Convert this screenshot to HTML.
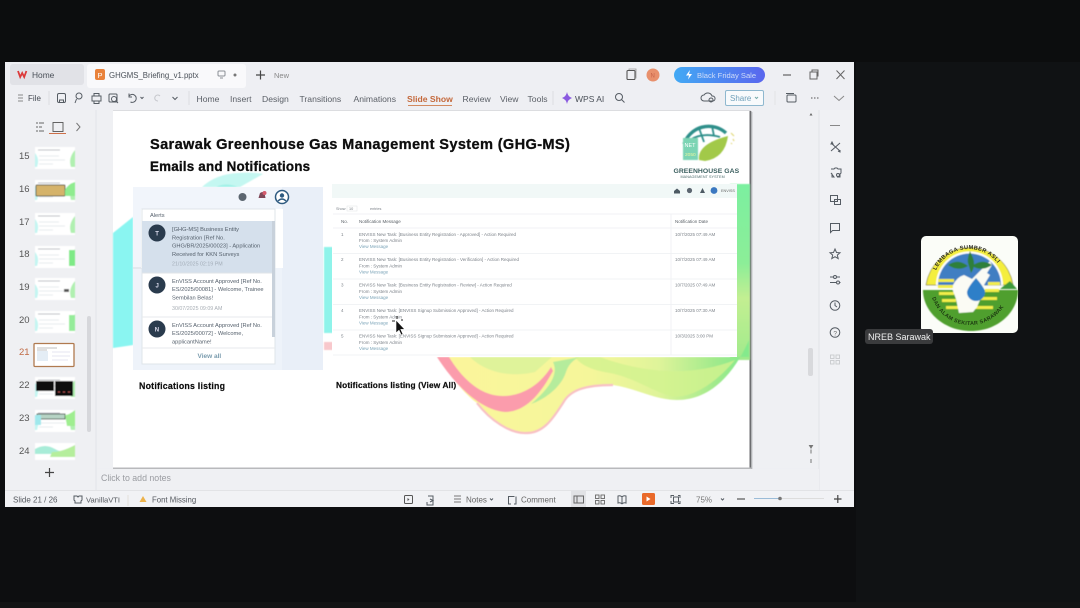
<!DOCTYPE html>
<html><head><meta charset="utf-8"><title>GHGMS Briefing</title>
<style>
html,body{margin:0;padding:0;background:#0d0e10;width:1080px;height:608px;overflow:hidden}
svg{display:block;position:absolute;left:0;top:0}
text{font-family:"Liberation Sans",sans-serif}
.ui{font-size:9px;fill:#444a52}
.tab{font-size:7.800px;fill:#4a5058}
.n{font-size:8.600px;fill:#5a5f66}
.ic{fill:none;stroke:#555b63;stroke-width:1}
.a{font-size:5.700px;fill:#56616d}
.m{font-size:4.500px;fill:#7d838a}
.l{font-size:4.500px;fill:#7ba4b8}
.h{font-weight:bold;fill:#0c0c0c;stroke:#0c0c0c}
</style></head><body>
<svg width="1080" height="608" viewBox="0 0 1080 608" xmlns="http://www.w3.org/2000/svg">
<defs>
<filter id="b" x="-5%" y="-5%" width="110%" height="110%"><feGaussianBlur stdDeviation="0.35"/></filter>
<filter id="bt" x="-5%" y="-5%" width="110%" height="110%"><feGaussianBlur stdDeviation="0.28"/></filter>
<filter id="b3" x="-20%" y="-20%" width="140%" height="140%"><feGaussianBlur stdDeviation="0.6"/></filter>
<linearGradient id="sale" x1="0" x2="1"><stop offset="0" stop-color="#42a9f4"/><stop offset="1" stop-color="#5a66ee"/></linearGradient>
<linearGradient id="wave" gradientUnits="userSpaceOnUse" x1="437" y1="0" x2="745" y2="0"><stop offset="0" stop-color="#fbf59c"/><stop offset=".5" stop-color="#f5f69a"/><stop offset=".72" stop-color="#dff49a"/><stop offset=".9" stop-color="#a2ea8c"/><stop offset="1" stop-color="#84ea8c"/></linearGradient>
<linearGradient id="rgreen" x1="0" x2="0" y1="0" y2="1"><stop offset="0" stop-color="#7cf0a0"/><stop offset=".45" stop-color="#8cee98"/><stop offset=".65" stop-color="#c3ef92"/><stop offset="1" stop-color="#a0ea8c"/></linearGradient>
<g id="th"><rect width="40" height="22" fill="#fff"/><path d="M0 6q5 6 2 14H0z" fill="#c4f6f2"/><path d="M40 3q-7 8-4 17h4z" fill="#b0f0b0"/><path d="M3 3h22" stroke="#a5aab0" stroke-width=".7"/><path d="M4 9h20M4 13h26M4 17h14" stroke="#dfe4e8" stroke-width=".8"/></g>
</defs>
<rect width="1080" height="608" fill="#0d0e10"/>
<rect x="856" y="0" width="224" height="608" fill="#101214"/>
<rect x="0" y="0" width="1080" height="62" fill="#0c0d0e"/>
<rect x="0" y="602" width="1080" height="6" fill="#131415"/>

<!-- window -->
<rect x="5" y="62" width="849" height="445" fill="#eeeff3"/>
<g filter="url(#b)">
<!-- tabs -->
<rect x="10" y="64" width="74" height="21" rx="3" fill="#e1e2e7"/>
<path d="M18 71l2.200 6 2-4 2 4 2.200-6" fill="none" stroke="#dc3b3b" stroke-width="1.800"/>
<text x="32" y="78" class="tab" style="font-size:8.400px">Home</text>
<rect x="87" y="64" width="159" height="24" rx="3" fill="#f9f9fb"/>
<rect x="95" y="69" width="10" height="11" rx="2" fill="#e9823a"/>
<text x="97.500" y="78" style="font-size:7.500px;fill:#fff">P</text>
<text x="109" y="78" class="tab">GHGMS_Briefing_v1.pptx</text>
<rect x="218" y="71" width="7" height="5" rx="1" fill="none" stroke="#8a8f96"/><path d="M220 78h3" stroke="#8a8f96"/>
<circle cx="235" cy="75" r="1.500" fill="#777"/>
<path d="M256 75h9M260.500 70.500v9" stroke="#444" stroke-width="1.200"/>
<text x="274" y="78" style="font-size:7.500px;fill:#888">New</text>
<rect x="627" y="70.500" width="8" height="9" rx="1" fill="none" stroke="#555" stroke-width="1.100"/><path d="M629 70v-1h7v9h-1" fill="none" stroke="#999" stroke-width=".8"/>
<circle cx="653" cy="75" r="6.500" fill="#e8906c"/><text x="650.500" y="77.500" style="font-size:6px;fill:#c8644a">N</text>
<rect x="674" y="67" width="91" height="16" rx="8" fill="url(#sale)"/>
<path d="M690 70l-4 5.500h3l-1 4 4-5.500h-3z" fill="#fff"/>
<text x="697" y="78" style="font-size:7.600px;fill:#cfdcf8">Black Friday Sale</text>
<path d="M783 75h8" stroke="#555" stroke-width="1.100"/>
<rect x="810" y="72" width="7" height="7" fill="none" stroke="#666"/><path d="M812 72v-2h6v6h-1" fill="none" stroke="#666"/>
<path d="M836.500 70.500l8 8.500M844.500 70.500l-8 8.500" stroke="#666" stroke-width="1"/>

<!-- toolbar -->
<path d="M18 95h5M18 98h5M18 101h5" stroke="#888" stroke-width=".9"/>
<text x="28" y="101" class="ui" style="font-size:8px">File</text>
<path d="M49 91v14" stroke="#dcdde1"/>
<rect x="57.500" y="93.500" width="8" height="9" rx="1.500" class="ic"/><path d="M59.500 103v-3h4v3" class="ic"/>
<circle cx="79" cy="96" r="3" class="ic"/><path d="M76.500 99l-1.500 4" class="ic"/>
<rect x="92" y="96" width="9" height="5" class="ic"/><path d="M94 96v-2.500h5V96M94 101v2.500h5V101" class="ic"/>
<rect x="109" y="94" width="8" height="8" rx="1" class="ic"/><circle cx="114" cy="99" r="2.500" class="ic"/><path d="M116 101l2 2" class="ic"/>
<path d="M129 96a4 4 0 1 1 1.500 6M129 93.500V97h3" class="ic"/><path d="M140.500 97l1.500 1.500 1.500-1.500" class="ic"/>
<path d="M160 96a3 3 0 1 0-2 5" fill="none" stroke="#c5c7cc"/>
<path d="M172.500 97l2.500 2.500 2.500-2.500" class="ic"/>
<path d="M189 91v14" stroke="#dcdde1"/>
<text x="196.500" y="102" class="n">Home</text>
<text x="230" y="102" class="n">Insert</text>
<text x="262" y="102" class="n">Design</text>
<text x="299.500" y="102" class="n">Transitions</text>
<text x="353.500" y="102" class="n">Animations</text>
<text x="407" y="102" style="font-size:8.600px;fill:#c4683a;font-weight:bold">Slide Show</text>
<rect x="408" y="105" width="44" height="1" fill="#d28a60"/>
<text x="462.500" y="102" class="n">Review</text>
<text x="500" y="102" class="n">View</text>
<text x="527.500" y="102" class="n">Tools</text>
<path d="M553 91v14" stroke="#dcdde1"/>
<path d="M567 92q.8 4.500 5 6q-4.200 1.500-5 6q-.8-4.500-5-6q4.200-1.500 5-6z" fill="#8a5ae0"/>
<text x="575" y="102" style="font-size:8.500px;fill:#4a5058">WPS AI</text>
<circle cx="619" cy="97" r="3.500" class="ic"/><path d="M621.500 99.500l3 3" class="ic"/>
<path d="M704 101a3 3 0 0 1 0-6 4.500 4.500 0 0 1 8 1 2.500 2.500 0 0 1 1 5z" class="ic"/><circle cx="711" cy="100" r="2" class="ic"/>
<rect x="725.500" y="90.500" width="38" height="15" rx="1.500" fill="#f8fafc" stroke="#8fb8cf"/>
<text x="730" y="101" style="font-size:8px;fill:#6fa0ba">Share</text><path d="M755 97l1.500 1.500 1.500-1.500" stroke="#7aa" fill="none"/>
<path d="M775 91v14" stroke="#e2e3e6"/>
<rect x="787" y="95" width="9" height="7" rx="1" class="ic"/><path d="M786 93.500h8" class="ic"/>
<path d="M811 98h1.500M814 98h1.500M817 98h1.500" stroke="#555" stroke-width="1"/>
<path d="M834 96l5 4.500 5-4.500" fill="none" stroke="#888"/>

<!-- left panel -->
<rect x="5" y="110" width="91" height="380" fill="#eff0f3"/>
<path d="M96 110v380" stroke="#e3e4e8"/>
<path d="M36 123h2M36 127h2M36 131h2M39 123h5M39 127h3M39 131h5" stroke="#666" stroke-width=".9"/>
<rect x="53" y="122.500" width="10" height="9" fill="none" stroke="#555" stroke-width=".9"/>
<rect x="49" y="133" width="17" height="1" fill="#cd7048"/>
<path d="M76.500 123l3.500 4-3.500 4" fill="none" stroke="#777"/>
<text x="19" y="159" style="font-size:9.500px;fill:#555">15</text>
<text x="19" y="192" style="font-size:9.500px;fill:#555">16</text>
<text x="19" y="225" style="font-size:9.500px;fill:#555">17</text>
<text x="19" y="257" style="font-size:9.500px;fill:#555">18</text>
<text x="19" y="290" style="font-size:9.500px;fill:#555">19</text>
<text x="19" y="323" style="font-size:9.500px;fill:#555">20</text>
<text x="19" y="355" style="font-size:9.500px;fill:#c06a44">21</text>
<text x="19" y="388" style="font-size:9.500px;fill:#555">22</text>
<text x="19" y="421" style="font-size:9.500px;fill:#555">23</text>
<text x="19" y="454" style="font-size:9.500px;fill:#555">24</text>
<g filter="url(#b3)">
<use href="#th" x="35" y="147"/>
<use href="#th" x="35" y="180"/><rect x="36" y="185" width="29" height="11" rx="1" fill="#d5b36b" stroke="#5c5c48"/><path d="M65 190q3-6 10-8v14h-10z" fill="#8fec8f"/>
<use href="#th" x="35" y="213"/>
<use href="#th" x="35" y="246"/><path d="M69 250h6v16h-6z" fill="#7eea86"/>
<use href="#th" x="35" y="278"/><rect x="64" y="289" width="5" height="3" fill="#555"/>
<use href="#th" x="35" y="311"/><path d="M69 315h6v16h-6z" fill="#95ec9a"/>
<use href="#th" x="35" y="377"/><rect x="36" y="381" width="18" height="10" fill="#0b1010"/><rect x="55" y="381" width="18" height="15" fill="#0d0d0d"/><path d="M58 392h2M63 392h2M68 392h2" stroke="#b05050"/>
<use href="#th" x="35" y="410"/><rect x="37" y="414" width="28" height="5" fill="#b6d4c4" stroke="#506058"/><path d="M65 415q4 0 10-5v16h-8z" fill="#9fee90"/><path d="M35 415h6v10h-6z" fill="#9fe8ec"/>
<rect x="35" y="443" width="40" height="17" fill="#fff"/><path d="M35 449q10-6 20 0t20-4v9H35z" fill="#a8ecd8"/><path d="M52 452q10 0 23-7v12H50z" fill="#b5ee9c"/>
</g>
<rect x="34" y="343.500" width="40" height="23" rx="1" fill="#fff" stroke="#b07a50" stroke-width="1.300"/>
<path d="M37 348h20M37 350h10" stroke="#aaa" stroke-width=".7"/><rect x="37" y="351" width="11" height="10" fill="#e4edf5"/><path d="M52 352h18M52 356h18M52 360h16" stroke="#dde" stroke-width=".8"/>
<rect x="87" y="316" width="4" height="116" rx="2" fill="#d6d7db"/>
<path d="M45 472.500h9M49.500 468v9" stroke="#444" stroke-width="1.200"/>

<!-- main canvas -->
<rect x="97" y="110" width="722" height="358" fill="#eff0f3"/>
<rect x="751.500" y="112" width="1" height="357" fill="#c5c6c9"/>
</g>
<rect x="113" y="111" width="638" height="357" fill="#fff"/>
<rect x="749.500" y="111" width="1.800" height="358" fill="#6d6e70"/>
<rect x="113" y="467.500" width="638" height="1.500" fill="#b8b9bc"/>
<rect x="113" y="110" width="638" height="1" fill="#dcdde0"/>

<!-- slide background art -->
<g filter="url(#b3)">
<path d="M113 233L133 217V345L113 348z" fill="#8af5f1"/>
<path d="M202 187Q216 174 238 173Q254 172 263 174L240 187z" fill="#c4f7f1"/>
<path d="M216 187q10-5 22 0z" fill="#a2f1e8"/>
<rect x="324" y="247" width="9" height="86" fill="#8ff3ea"/>
<rect x="324" y="342" width="9" height="8" fill="#f8c8cc"/>
<rect x="730" y="184" width="20" height="176" fill="url(#rgreen)"/>
<path d="M437 357C450 375 465 395 477 403C490 420 510 434 527 433C545 433 555 415 563 403C570 390 585 385 613 385C635 388 655 400 677 400C705 400 730 382 749 340V357z" fill="url(#wave)"/>
<path d="M477 403C490 420 510 434 527 433C545 433 555 415 563 403C570 390 585 385 613 385" fill="none" stroke="#f8c0c4" stroke-width="2.200"/>
<path d="M437 357L449 357C460 375 478 396 503 396C522 396 540 385 551 367L553 371C545 385 530 412 505 412C480 410 455 385 437 357z" fill="#fb9cac"/>
<path d="M470 357C485 372 510 378 535 372L552 357z" fill="#dff39a"/>
<path d="M553 362C560 376 545 392 531 404C548 398 562 385 566 372C568 366 572 360 580 357z" fill="#b5ec9c"/>
<path d="M600 357C640 372 690 378 735 360C715 384 690 400 670 396C650 390 635 378 610 373C590 370 580 364 575 357z" fill="#d2f28e" opacity=".8"/>
</g>

<g filter="url(#bt)">
<text x="150" y="149" class="h" style="font-size:14.600px;letter-spacing:.35px;stroke-width:.3px">Sarawak Greenhouse Gas Management System (GHG-MS)</text>
<text x="150" y="171" class="h" style="font-size:13.400px;letter-spacing:.2px;stroke-width:.3px">Emails and Notifications</text>
</g>

<!-- logo -->
<g filter="url(#b3)">
<path d="M684 144a26 26 0 0 1 42-11" fill="none" stroke="#2e8f8a" stroke-width="3.400"/>
<path d="M690 140q12-8 30-3M699 128l5 14M712 126l2 10" fill="none" stroke="#2e8f8a" stroke-width="1.800"/>
<rect x="683" y="138" width="15" height="22" fill="#7cd4b4"/>
<path d="M699 160q-2-16 29-24q-3 22-23 25z" fill="#a2c94a"/>
<path d="M731 133l3 3M733 139l1 2M731 143l1 1" stroke="#e2d878" stroke-width="1.200"/>
</g>
<text x="684.500" y="147" style="font-size:5.500px;fill:#fff">NET</text>
<text x="685" y="156" style="font-size:4.800px;fill:#eaf7a0">2050</text>
<g filter="url(#bt)">
<text x="673.500" y="173" style="font-size:6.800px;font-weight:bold;fill:#3a5e5e;letter-spacing:.05px">GREENHOUSE GAS</text>
<text x="680.500" y="178" style="font-size:3.700px;fill:#4a6a6a;letter-spacing:.1px">MANAGEMENT SYSTEM</text>
</g>

<!-- left panel image -->
<g filter="url(#b)">
<rect x="133" y="187" width="190" height="183" fill="#eef3fa"/>
<rect x="133" y="187" width="150" height="80" fill="#f1f5fb"/>
<rect x="282" y="187" width="41" height="183" fill="#e9eff8"/>
<path d="M133 268h9" stroke="#d8dde2"/>
<rect x="141" y="209" width="142" height="59" fill="#fff"/>
<rect x="142" y="209" width="133" height="155" fill="#fff" stroke="#dfe4e9"/>
<text x="150" y="217" class="a">Alerts</text>
<rect x="142" y="221" width="130" height="52" fill="#d5e0ec"/>
<path d="M142 273h133" stroke="#dfe3e7"/>
<path d="M142 317h133M142 348h133" stroke="#e7eaed"/>
<rect x="272" y="221" width="3" height="116" fill="#c8d1db"/>
<circle cx="157" cy="233" r="8.500" fill="#2b3b4e"/><text x="155.200" y="235.500" style="font-size:6px;font-weight:bold;fill:#dde">T</text>
<circle cx="157" cy="285" r="8.500" fill="#2b3b4e"/><text x="155.500" y="287.500" style="font-size:6px;font-weight:bold;fill:#dde">J</text>
<circle cx="157" cy="329" r="8.500" fill="#2b3b4e"/><text x="154.700" y="331.500" style="font-size:6px;font-weight:bold;fill:#dde">N</text>
<text x="172" y="231" class="a">[GHG-MS] Business Entity</text>
<text x="172" y="239.500" class="a">Registration [Ref No.</text>
<text x="172" y="247.500" class="a">GHG/BR/2025/00023] - Application</text>
<text x="172" y="256" class="a">Received for KKN Surveys</text>
<text x="172" y="265.500" style="font-size:5.300px;fill:#a3adb8">21/10/2025 02:19 PM</text>
<text x="172" y="283" class="a">EnVISS Account Approved [Ref No.</text>
<text x="172" y="291" class="a">ES/2025/00081] - Welcome, Trainee</text>
<text x="172" y="299.500" class="a">Sembilan Belas!</text>
<text x="172" y="310" style="font-size:5.300px;fill:#a8aeb5">30/07/2025 09:09 AM</text>
<text x="172" y="327" class="a">EnVISS Account Approved [Ref No.</text>
<text x="172" y="335" class="a">ES/2025/00072] - Welcome,</text>
<text x="172" y="343.500" class="a">applicantName!</text>
<text x="197.500" y="358" style="font-size:6.500px;font-weight:bold;fill:#7a9cae">View all</text>
<circle cx="242.500" cy="197" r="4" fill="#5c6670"/>
<path d="M260 193q3-2 4.500 0l1 5h-7z" fill="#7e4658"/><circle cx="264.500" cy="193" r="2" fill="#d45a6c"/>
<circle cx="282" cy="197" r="6.500" fill="#fff" stroke="#2d5a80" stroke-width="1.500"/><circle cx="282" cy="195.500" r="2.200" fill="#2d5a80"/><path d="M278 201q4-4 8 0" stroke="#2d5a80" fill="none" stroke-width="1.300"/>
</g>
<g filter="url(#bt)">
<text x="139" y="389" class="h" style="font-size:8.800px;letter-spacing:.22px;stroke-width:.2px">Notifications listing</text>
<text x="336" y="388" class="h" style="font-size:8.300px;letter-spacing:.13px;stroke-width:.2px">Notifications listing (View All)</text>
</g>

<!-- right image -->
<g filter="url(#b)">
<rect x="332" y="184" width="405" height="173" fill="#fff"/>
<rect x="332" y="184" width="405" height="14" fill="#f1f8f7"/>
<path d="M333 214h404M333 228h404" stroke="#f0f2f4"/>
<path d="M333 253.500h404M333 279h404M333 304.500h404M333 330h404M333 355h404" stroke="#f1f3f5"/>
<path d="M671 214v141" stroke="#f0f2f4"/>
<text x="336" y="210" class="m" style="font-size:3.800px">Show</text><rect x="347" y="206" width="10" height="5" fill="none" stroke="#e0e3e6" stroke-width=".5"/><text x="349" y="210" class="m" style="font-size:3.800px">10</text><text x="370" y="210" class="m" style="font-size:3.800px">entries</text>
<text x="341" y="223" style="font-size:4.500px;fill:#5c6268">No.</text>
<text x="359" y="223" style="font-size:4.500px;fill:#5c6268">Notification Message</text>
<text x="675" y="223" style="font-size:4.500px;fill:#5c6268">Notification Date</text>

<text x="341" y="236" class="m">1</text><text x="359" y="236" class="m">ENVISS New Task: [Business Entity Registration - Approved] - Action Required</text><text x="359" y="242" class="m">From : System Admin</text><text x="359" y="248" class="l">View Message</text><text x="675" y="236" class="m">10/7/2025 07:49 AM</text>
<text x="341" y="261" class="m">2</text><text x="359" y="261" class="m">ENVISS New Task: [Business Entity Registration - Verification] - Action Required</text><text x="359" y="267.500" class="m">From : System Admin</text><text x="359" y="273.500" class="l">View Message</text><text x="675" y="261" class="m">10/7/2025 07:49 AM</text>
<text x="341" y="286.500" class="m">3</text><text x="359" y="286.500" class="m">ENVISS New Task: [Business Entity Registration - Review] - Action Required</text><text x="359" y="293" class="m">From : System Admin</text><text x="359" y="299" class="l">View Message</text><text x="675" y="286.500" class="m">10/7/2025 07:49 AM</text>
<text x="341" y="312" class="m">4</text><text x="359" y="312" class="m">ENVISS New Task: [ENVISS Signup Submission Approved] - Action Required</text><text x="359" y="318.500" class="m">From : System Admin</text><text x="359" y="324.500" class="l">View Message</text><text x="675" y="312" class="m">10/7/2025 07:30 AM</text>
<text x="341" y="337.500" class="m">5</text><text x="359" y="337.500" class="m">ENVISS New Task: [ENVISS Signup Submission Approved] - Action Required</text><text x="359" y="344" class="m">From : System Admin</text><text x="359" y="350" class="l">View Message</text><text x="675" y="337.500" class="m">10/3/2025 3:00 PM</text>

<path d="M674 191l3-2.500 3 2.500v2.500h-6z" fill="#4e5a64"/>
<circle cx="689.500" cy="190.500" r="2.600" fill="#5c6670"/>
<path d="M700 193l2.500-5 2.500 5z" fill="#4e5a64"/>
<circle cx="714" cy="190.500" r="3.400" fill="#3b78c0"/>
<text x="721" y="192" style="font-size:3.800px;fill:#666">ENVISS</text>
</g>

<!-- cursor -->
<path d="M396 320l0 13 3-2.800 2.200 4.800 1.800-.8-2.200-4.800h4z" fill="#111" stroke="#fff" stroke-width=".6"/>
<path d="M397 316v3M392 321h3M401 320h2" stroke="#222" stroke-width="1"/>

<!-- scrollbars and right tools -->
<g filter="url(#b)">
<path d="M811 113l1.500 2.500h-3z" fill="#666"/>
<rect x="808" y="348" width="5" height="28" rx="2" fill="#d8d9dc"/>
<path d="M811 448l-1.500-2.500h3zM811 449.500v4M811 459v4" stroke="#777" fill="#777"/>
<rect x="819" y="110" width="35" height="380" fill="#f0f1f4"/>
<path d="M819 110v380" stroke="#e2e3e7"/>
<path d="M830 125.500h10" stroke="#888" stroke-width="1"/>
<path d="M831 143l9 8M840 143l-9 8M832 142l-1 2 2 0zM838 151l2 1 0-2" class="ic" stroke-width="1.200"/>
<path d="M831 169h3l1-1h2l1 1h3v4l-1 1v3h-3M834 177h-2v-3l-1-1z" class="ic"/><circle cx="838" cy="175" r="1.500" class="ic"/>
<rect x="830.500" y="195.500" width="7" height="6" class="ic"/><rect x="834.500" y="199.500" width="6" height="5" class="ic"/>
<path d="M830.500 223.500h9v7h-7l-2 2z" class="ic"/>
<path d="M835 249l1.500 3.500 3.500.3-2.700 2.300.9 3.500-3.200-1.900-3.200 1.900.9-3.500-2.700-2.300 3.500-.3z" class="ic"/>
<path d="M830 277h3M837 277h3M830 282.500h6M839.500 282.500h1" class="ic"/><circle cx="835" cy="277" r="1.500" class="ic"/><circle cx="838" cy="282.500" r="1.500" class="ic"/>
<circle cx="835" cy="305.500" r="4.800" class="ic"/><path d="M835 302.500v3l2 1.500" class="ic"/>
<circle cx="835" cy="332.500" r="4.800" class="ic"/><text x="833.400" y="335.300" style="font-size:6.500px;fill:#666">?</text>
<g fill="none" stroke="#c8cace" stroke-width=".9"><rect x="830.500" y="355" width="3.500" height="3.500"/><rect x="836" y="355" width="3.500" height="3.500"/><rect x="830.500" y="360.500" width="3.500" height="3.500"/><rect x="836" y="360.500" width="3.500" height="3.500"/></g>

<!-- notes -->
<rect x="97" y="469" width="722" height="21" fill="#eff0f3"/>
<text x="101" y="481" style="font-size:8.800px;fill:#9a9ca1">Click to add notes</text>

<!-- status bar -->
<rect x="5" y="491" width="849" height="16" fill="#f1f2f5"/>
<path d="M5 490.500h849" stroke="#e2e3e6"/>
<text x="13" y="502.500" style="font-size:8px;fill:#55595f">Slide 21 / 26</text>
<path d="M74 496h3l1 1 1-1h3v4l-1 1v2h-6v-2l-1-1z" class="ic"/>
<text x="86" y="502.500" style="font-size:7.600px;fill:#55595f">VanillaVTI</text>
<path d="M128 495v11" stroke="#e4e0dc"/>
<path d="M143 496l3.500 6h-7z" fill="#ecb24c"/>
<text x="152" y="502.500" style="font-size:7.800px;fill:#55595f">Font Missing</text>
<rect x="404.500" y="495.500" width="8" height="8" rx="1" fill="none" stroke="#555"/><path d="M407.500 498v3l2-1.500z" fill="#555"/>
<path d="M428 496h5v9h-6v-3M430 499l3 1.500-3 1.500" class="ic"/>
<path d="M454 496h7M454 499h7M454 502h7" stroke="#777" stroke-width=".9"/>
<text x="466" y="502.500" style="font-size:8px;fill:#666">Notes</text><path d="M490 498.500l1.500 1.500 1.500-1.500" class="ic"/>
<path d="M511 504h-2.500v-7.500h6M516 496.500v7.500h-2" class="ic"/>
<text x="521" y="502.500" style="font-size:8px;fill:#666">Comment</text>
<rect x="571" y="491" width="15" height="16" fill="#e1e2e5"/>
<rect x="574" y="496" width="9.500" height="7" fill="none" stroke="#666"/><path d="M577 496v7" stroke="#666"/>
<g fill="none" stroke="#666" stroke-width=".9"><rect x="595.500" y="495" width="3.500" height="3.500"/><rect x="601" y="495" width="3.500" height="3.500"/><rect x="595.500" y="500.500" width="3.500" height="3.500"/><rect x="601" y="500.500" width="3.500" height="3.500"/></g>
<path d="M618 496q2-.8 4 .8q2-1.600 4-.8v7q-2-.8-4 .8q-2-1.600-4-.8zM622 497v7" class="ic"/>
<rect x="642" y="493" width="13" height="12" rx="1.500" fill="#e9692c"/><path d="M646.500 496.500v5l4-2.500z" fill="#fff"/>
<path d="M671 498v-2.500h3M678 495.500h2v2.500M671 501v2.500h3M678 503.500h2V501" class="ic"/><rect x="673.500" y="497" width="5" height="5" class="ic"/>
<text x="696" y="502.500" style="font-size:8px;fill:#777">75%</text>
<path d="M721 498.500l1.500 1.500 1.500-1.500" class="ic"/>
<path d="M737 499h8" stroke="#555" stroke-width="1.200"/>
<path d="M754 498.500h26" stroke="#9bbcd8" stroke-width="1"/><path d="M780 498.500h44" stroke="#ddd" stroke-width="1"/><circle cx="780" cy="498.500" r="1.800" fill="#777"/>
<path d="M834 499h7.500M837.800 495v8" stroke="#444" stroke-width="1.200"/>
</g>

<!-- NREB tile -->
<rect x="921" y="236" width="97" height="97" rx="5" fill="#fbfdf8"/>
<g filter="url(#b3)">
<path d="M926 285a44 44 0 0 1 87 0z" fill="#f4ee3e" stroke="#444" stroke-width=".5"/>
<path d="M936 285a33.500 33.500 0 0 1 67 0z" fill="#fff"/>
<path d="M938 285a31.500 31.500 0 0 1 63 0z" fill="#3f7ec2"/>
<path d="M1000 289l10-8 7 8z" fill="#3e9a3a"/>
<path d="M923 290h95c0 22-20 41-47 41s-48-19-48-41z" fill="#4f9f2e"/>
<rect x="938" y="279" width="16" height="3" fill="#f2ee4a"/><rect x="938" y="285" width="16" height="3" fill="#f2ee4a"/>
<path d="M939 292h15v3h-15zM942 299h14v3h-14zM946 306h14v3h-14zM975 309h18v-3h-18zM980 300h17v-3h-17zM985 292h14v-3h-14zM988 282h12v3h-12z" fill="#f2ee4a"/>
<path d="M953 285q4-8 11-10l8 4 8-8 10-10 2 4-5 8 3 2-6 10-1 8-6 14-4 5-14 1-3-14-3-8z" fill="#fbfbf4"/>
<path d="M976 278q8 9 9 14a9 9 0 0 1-18 0q1-5 9-14z" fill="#2f7fc8"/>
<path d="M970 251q-3 8-2 12l3 10q5-7 2-15zM948 265q10-7 20 1-10 6-20-1zM992 265q-10-7-20 1 10 6 20-1z" fill="#2f7f3a"/>
</g>
<path id="arcT" d="M933 285a36 36 0 0 1 72 0" fill="none"/>
<path id="arcB" d="M930 285a40 40 0 0 0 80 0" fill="none"/>
<text style="font-size:5.600px;font-weight:bold;letter-spacing:.35px" fill="#2a2a1e"><textPath href="#arcT" startOffset="15">LEMBAGA SUMBER ASLI</textPath></text>
<text style="font-size:5.400px;font-weight:bold;letter-spacing:.3px" fill="#1d3a12"><textPath href="#arcB" startOffset="13">DAN ALAM SEKITAR SARAWAK</textPath></text>
<rect x="865" y="329" width="68" height="15" rx="3" fill="#3a3b3d"/>
<text x="868" y="340" style="font-size:9px;fill:#f0f0f0">NREB Sarawak</text>
</svg>
</body></html>
